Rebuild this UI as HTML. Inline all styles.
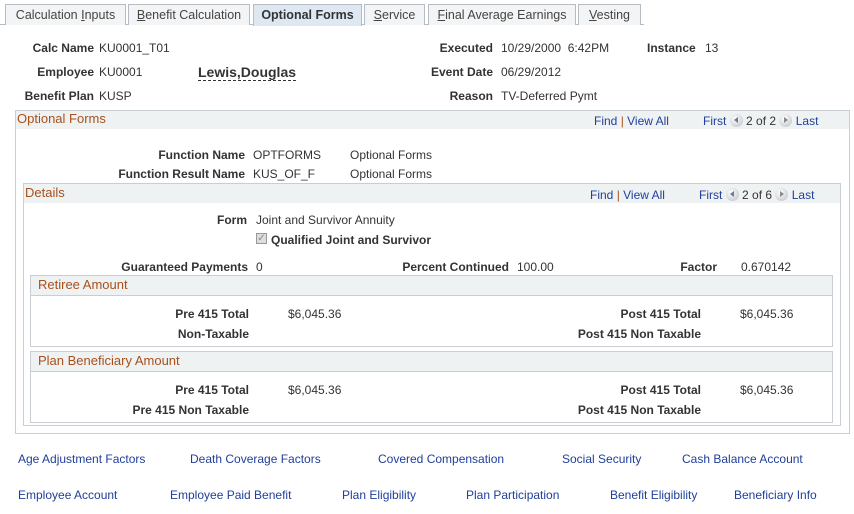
<!DOCTYPE html>
<html><head><meta charset="utf-8"><style>
*{margin:0;padding:0;box-sizing:border-box}
body{width:854px;height:514px;background:#fff;font-family:"Liberation Sans",Arial,sans-serif;font-size:12px;color:#333;position:relative;overflow:hidden}
.a{position:absolute;white-space:nowrap;line-height:14px}
.r{text-align:right}
.b{font-weight:bold}
.l{color:#1f3f9a}
.t{color:#a8501c;font-size:13px}
.tab{position:absolute;top:4px;height:21px;border:1px solid #b5bcc4;border-bottom:none;background:#f3f4f5;color:#444;font-size:12.5px;text-align:center;line-height:20px}
.tab u{text-decoration:underline}
.box{position:absolute;border:1px solid #c9ced4}
.hd{position:absolute;background:#eff2f3}
.arw{display:inline-block;width:13px;height:13px;border-radius:50%;background:radial-gradient(circle at 40% 35%,#fff,#b9bec5);vertical-align:-2px;position:relative}
.arw.lf::after{content:"";position:absolute;left:4px;top:3px;border-right:4px solid #6a7a90;border-top:3.5px solid transparent;border-bottom:3.5px solid transparent}
.arw.rt::after{content:"";position:absolute;left:5px;top:3px;border-left:4px solid #8a8a8a;border-top:3.5px solid transparent;border-bottom:3.5px solid transparent}
</style></head><body>
<div style="position:absolute;left:0;top:24px;width:644px;height:1px;background:#b5bcc4"></div>
<div class="tab" style="left:5px;width:121px">Calculation <u>I</u>nputs</div>
<div class="tab" style="left:128px;width:122px"><u>B</u>enefit Calculation</div>
<div class="tab b" style="left:253px;width:109px;background:#dde8f3;height:22px;font-weight:bold;color:#333">Optional Forms</div>
<div class="tab" style="left:364px;width:61px"><u>S</u>ervice</div>
<div class="tab" style="left:428px;width:148px"><u>F</u>inal Average Earnings</div>
<div class="tab" style="left:578px;width:63px"><u>V</u>esting</div>

<div class="a b r" style="right:760px;top:41px">Calc Name</div><div class="a" style="left:99px;top:41px">KU0001_T01</div>
<div class="a b r" style="right:760px;top:65px">Employee</div><div class="a" style="left:99px;top:65px">KU0001</div>
<div class="a b" style="left:198px;top:64px;font-size:14px;border-bottom:1px dashed #333;line-height:16px">Lewis,Douglas</div>
<div class="a b r" style="right:760px;top:89px">Benefit Plan</div><div class="a" style="left:99px;top:89px">KUSP</div>
<div class="a b r" style="right:361px;top:41px">Executed</div><div class="a" style="left:501px;top:41px">10/29/2000&nbsp; 6:42PM</div>
<div class="a b r" style="right:361px;top:65px">Event Date</div><div class="a" style="left:501px;top:65px">06/29/2012</div>
<div class="a b r" style="right:361px;top:89px">Reason</div><div class="a" style="left:501px;top:89px">TV-Deferred Pymt</div>
<div class="a b" style="left:647px;top:41px">Instance</div><div class="a" style="left:705px;top:41px">13</div>

<div class="box" style="left:15px;top:110px;width:835px;height:324px"></div>
<div class="hd" style="left:16px;top:111px;width:833px;height:18px"></div>
<div class="a t" style="left:17px;top:112px">Optional Forms</div>
<div class="a l" style="left:594px;top:114px">Find <span style="color:#a8501c">|</span> View All</div>
<div class="a l" style="left:703px;top:114px">First <span class="arw lf"></span> <span style="color:#333">2 of 2</span> <span class="arw rt"></span> Last</div>

<div class="a b r" style="right:609px;top:148px">Function Name</div><div class="a" style="left:253px;top:148px">OPTFORMS</div><div class="a" style="left:350px;top:148px">Optional Forms</div>
<div class="a b r" style="right:609px;top:167px">Function Result Name</div><div class="a" style="left:253px;top:167px">KUS_OF_F</div><div class="a" style="left:350px;top:167px">Optional Forms</div>

<div class="box" style="left:23px;top:183px;width:818px;height:243px"></div>
<div class="hd" style="left:24px;top:184px;width:816px;height:19px"></div>
<div class="a t" style="left:25px;top:186px">Details</div>
<div class="a l" style="left:590px;top:188px">Find <span style="color:#a8501c">|</span> View All</div>
<div class="a l" style="left:699px;top:188px">First <span class="arw lf"></span> <span style="color:#333">2 of 6</span> <span class="arw rt"></span> Last</div>

<div class="a b r" style="right:607px;top:213px">Form</div><div class="a" style="left:256px;top:213px">Joint and Survivor Annuity</div>
<div class="a" style="left:256px;top:233px;width:11px;height:11px;border:1px solid #999;background:#ddd;color:#888;font-size:10px;line-height:9px;text-align:center">✓</div>
<div class="a b" style="left:271px;top:233px">Qualified Joint and Survivor</div>

<div class="a b r" style="right:606px;top:260px">Guaranteed Payments</div><div class="a" style="left:256px;top:260px">0</div>
<div class="a b r" style="right:345px;top:260px">Percent Continued</div><div class="a" style="left:517px;top:260px">100.00</div>
<div class="a b r" style="right:137px;top:260px">Factor</div><div class="a" style="left:741px;top:260px">0.670142</div>

<div class="box" style="left:30px;top:275px;width:803px;height:72px"></div>
<div class="hd" style="left:31px;top:276px;width:801px;height:20px;border-bottom:1px solid #c9ced4"></div>
<div class="a t" style="left:38px;top:278px">Retiree Amount</div>
<div class="a b r" style="right:605px;top:307px">Pre 415 Total</div><div class="a" style="left:288px;top:307px">$6,045.36</div>
<div class="a b r" style="right:605px;top:327px">Non-Taxable</div>
<div class="a b r" style="right:153px;top:307px">Post 415 Total</div><div class="a" style="left:740px;top:307px">$6,045.36</div>
<div class="a b r" style="right:153px;top:327px">Post 415 Non Taxable</div>

<div class="box" style="left:30px;top:351px;width:803px;height:72px"></div>
<div class="hd" style="left:31px;top:352px;width:801px;height:20px;border-bottom:1px solid #c9ced4"></div>
<div class="a t" style="left:38px;top:354px">Plan Beneficiary Amount</div>
<div class="a b r" style="right:605px;top:383px">Pre 415 Total</div><div class="a" style="left:288px;top:383px">$6,045.36</div>
<div class="a b r" style="right:605px;top:403px">Pre 415 Non Taxable</div>
<div class="a b r" style="right:153px;top:383px">Post 415 Total</div><div class="a" style="left:740px;top:383px">$6,045.36</div>
<div class="a b r" style="right:153px;top:403px">Post 415 Non Taxable</div>

<div class="a l" style="left:18px;top:452px">Age Adjustment Factors</div>
<div class="a l" style="left:190px;top:452px">Death Coverage Factors</div>
<div class="a l" style="left:378px;top:452px">Covered Compensation</div>
<div class="a l" style="left:562px;top:452px">Social Security</div>
<div class="a l" style="left:682px;top:452px">Cash Balance Account</div>
<div class="a l" style="left:18px;top:488px">Employee Account</div>
<div class="a l" style="left:170px;top:488px">Employee Paid Benefit</div>
<div class="a l" style="left:342px;top:488px">Plan Eligibility</div>
<div class="a l" style="left:466px;top:488px">Plan Participation</div>
<div class="a l" style="left:610px;top:488px">Benefit Eligibility</div>
<div class="a l" style="left:734px;top:488px">Beneficiary Info</div>
</body></html>
